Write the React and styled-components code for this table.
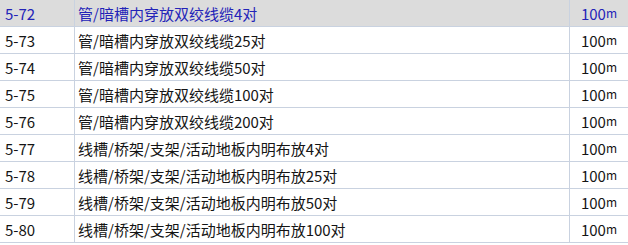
import React from "react";
import styled, { createGlobalStyle } from "styled-components";

const GlobalStyle = createGlobalStyle`
  html, body {
    margin: 0;
    padding: 0;
    background: #ffffff;
  }
  body {
    font-family: "Noto Sans CJK SC", "Noto Sans", sans-serif;
  }
`;

const Table = styled.div`
  width: 628px;
  display: flex;
  flex-direction: column;
`;

const Row = styled.div`
  display: grid;
  grid-template-columns: 74px 1fr 59px;
  height: 27px;
  box-sizing: border-box;
  border-bottom: 1px solid #c9d2e0;
  background: ${(p) => (p.$active ? "#dcdcdc" : "#ffffff")};
  color: ${(p) => (p.$active ? "#2323b8" : "#141414")};
  font-size: 15px;
`;

const Cell = styled.div`
  display: flex;
  align-items: center;
  justify-content: ${(p) => (p.$center ? "center" : "flex-start")};
  padding-left: ${(p) => p.$pad || 0}px;
  border-left: ${(p) => (p.$line ? "1px solid #c9d2e0" : "none")};
  white-space: nowrap;
  overflow: hidden;
  line-height: 1;
`;

const Unit = styled.span`
  font-size: 12px;
`;

const rows = [
  ["5-72", "管/暗槽内穿放双绞线缆4对"],
  ["5-73", "管/暗槽内穿放双绞线缆25对"],
  ["5-74", "管/暗槽内穿放双绞线缆50对"],
  ["5-75", "管/暗槽内穿放双绞线缆100对"],
  ["5-76", "管/暗槽内穿放双绞线缆200对"],
  ["5-77", "线槽/桥架/支架/活动地板内明布放4对"],
  ["5-78", "线槽/桥架/支架/活动地板内明布放25对"],
  ["5-79", "线槽/桥架/支架/活动地板内明布放50对"],
  ["5-80", "线槽/桥架/支架/活动地板内明布放100对"],
];

export default function App() {
  return (
    <>
      <GlobalStyle />
      <Table>
        {rows.map(([code, name], i) => (
          <Row key={code} $active={i === 0}>
            <Cell $pad={5}>{code}</Cell>
            <Cell $pad={3} $line>
              {name}
            </Cell>
            <Cell $center $line>
              100<Unit>m</Unit>
            </Cell>
          </Row>
        ))}
      </Table>
    </>
  );
}
